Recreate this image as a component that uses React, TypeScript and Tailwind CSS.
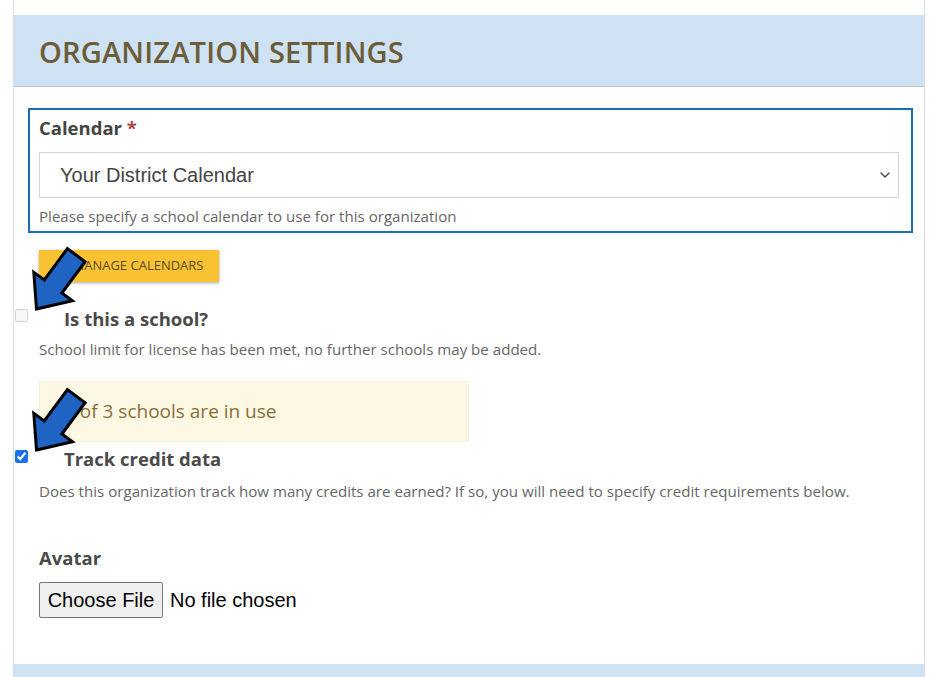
import React from "react";
import { ChevronDown, CalendarDays } from "lucide-react";

function arrowPoints(tx: number, ty: number) {
  const u = [0.593, -0.804];
  const n = [0.804, 0.593];
  const L = 67, h = 28, w = 24, s = 11;
  const p = (a: number, b: number) => `${(tx + a * u[0] + b * n[0]).toFixed(1)},${(ty + a * u[1] + b * n[1]).toFixed(1)}`;
  return [p(0, 0), p(h, w), p(h, s), p(L, s), p(L, -s), p(h, -s), p(h, -w)].join(" ");
}

export default function App() {
  return (
    <div className="relative w-[936px] h-[677px] overflow-hidden bg-white" style={{ fontFamily: '"Open Sans", sans-serif' }}>
      <div className="ml-[13px] w-[912px] border-x border-[#dedede] pt-[15px]">
        <div className="h-[72px] bg-[#cfe2f3] border-b border-[#b7c7d4] px-[25px] flex items-center">
          <h1 className="text-[29px] font-semibold tracking-[0.2px] text-[#6c5c37] leading-none mt-[2px]">ORGANIZATION SETTINGS</h1>
        </div>

        <div className="px-[25px] pt-[21px] pb-[46px] text-[#444]">
          <div className="-ml-[11px] -mr-[14px] border-2 border-[#1d6db5] pl-[9px] pr-[12px] pt-[4px] pb-[4px]">
            <div className="text-[18.5px] font-bold leading-[28px] text-[#444]">
              Calendar <span className="text-[#a94442]">*</span>
            </div>
            <div className="mt-[10px] h-[46px] border border-[#d4d4d4] flex items-center justify-between pl-[20px] pr-[5px]" style={{ fontFamily: '"Liberation Sans", Arial, sans-serif' }}>
              <span className="text-[20px] text-[#444]">Your District Calendar</span>
              <ChevronDown size={16} strokeWidth={2} className="text-[#444]" />
            </div>
            <div className="mt-[8px] text-[15.1px] leading-[21px] text-[#666]">
              Please specify a school calendar to use for this organization
            </div>
          </div>

          <div className="mt-[17px]">
            <button className="h-[32px] w-[180px] bg-[#f9c233] shadow-[0_1px_3px_rgba(0,0,0,0.35)] flex items-center justify-center gap-[6px] text-[13px] text-[#5b4a22]">
              <CalendarDays size={12} />
              <span>MANAGE CALENDARS</span>
            </button>
          </div>

          <div className="mt-[23px] -ml-[24px] flex items-center h-[28px]">
            <input type="checkbox" disabled className="w-[13px] h-[13px] m-0 -mt-[8px]" />
            <span className="ml-[36px] text-[18.5px] font-bold leading-[28px] text-[#4a4a4a]">Is this a school?</span>
          </div>
          <div className="mt-[6px] text-[15.1px] leading-[21px] text-[#666]">
            School limit for license has been met, no further schools may be added.
          </div>

          <div className="mt-[21px] w-[430px] h-[61px] bg-[#fcf8e3] border border-[#f8f2d8] flex items-center pl-[24px]">
            <span className="text-[19px] text-[#8a6d3b]">3 of 3 schools are in use</span>
          </div>

          <div className="mt-[3px] -ml-[24px] flex items-center h-[28px]">
            <input type="checkbox" defaultChecked className="w-[13px] h-[13px] m-0 -mt-[6px] accent-[#1a73e8]" />
            <span className="ml-[36px] text-[18.5px] font-bold leading-[28px] text-[#4a4a4a]">Track credit data</span>
          </div>
          <div className="mt-[8px] text-[15.1px] leading-[21px] text-[#666]">
            Does this organization track how many credits are earned? If so, you will need to specify credit requirements below.
          </div>

          <div className="mt-[42px] text-[18.5px] font-bold leading-[28px] text-[#4a4a4a]">Avatar</div>
          <div className="mt-[10px] flex items-center h-[36px]" style={{ fontFamily: '"Liberation Sans", Arial, sans-serif' }}>
            <span className="h-[36px] w-[124px] flex items-center justify-center bg-[#efefef] border border-[#767676] rounded-[2px] text-[20px] text-black">Choose File</span>
            <span className="ml-[7px] text-[20px] text-black">No file chosen</span>
          </div>
        </div>

        <div className="h-[20px] bg-[#cfe2f3]" />
      </div>

      <svg className="absolute left-0 top-0 pointer-events-none" width="936" height="677">
        <polygon points={arrowPoints(36.5, 309)} fill="#1f64c3" stroke="#000" strokeWidth="3" strokeLinejoin="miter" />
        <polygon points={arrowPoints(36.5, 450)} fill="#1f64c3" stroke="#000" strokeWidth="3" strokeLinejoin="miter" />
      </svg>
    </div>
  );
}
